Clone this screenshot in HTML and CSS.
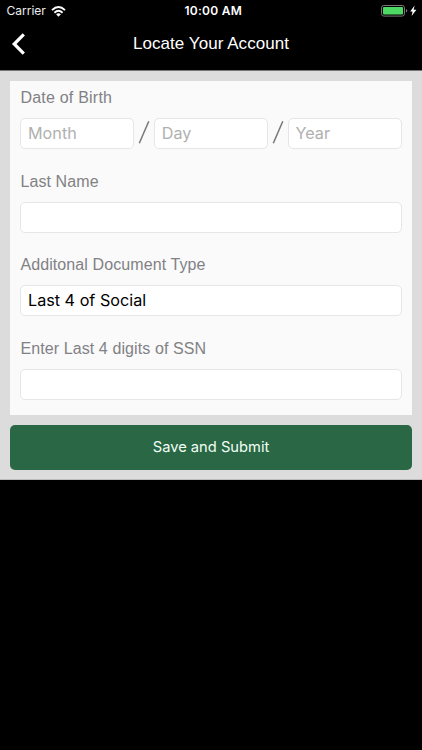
FILE: index.html
```html
<!DOCTYPE html>
<html lang="en">
<head>
<meta charset="utf-8">
<title>Locate Your Account</title>
<link rel="stylesheet" href="styles.css">
</head>
<body>
<div class="status">
  <span class="carrier">Carrier</span>
  <svg class="wifi" width="15" height="11" viewBox="0 0 15 11" fill="none" stroke="#fff" stroke-width="1.9"><path d="M1 4.1Q7.5-1.9 14 4.1M3.4 6.7Q7.5 3 11.6 6.7"/><path d="M5.1 8.3Q7.5 6.3 9.9 8.3L7.5 10.8Z" fill="#fff" stroke="none"/></svg>
  <span class="time">10:00 AM</span>
  <svg class="battery" width="37" height="12" viewBox="0 0 37 12"><rect x=".5" y=".5" width="23" height="10.6" rx="2.4" fill="none" stroke="#777"/><rect x="2" y="2" width="20" height="7.6" rx="1" fill="#4cd964"/><path d="M25 4v3.6q1.3-.5 1.3-1.8T25 4Z" fill="#777"/><path d="M33.6.6 29.2 6.5h2.4L30.6 11 35.4 4.7h-2.8Z" fill="#fff"/></svg>
</div>
<header class="nav">
  <svg class="back" width="14" height="22" viewBox="0 0 14 22" fill="none" stroke="#fff" stroke-width="3.2"><path d="M12.8 1.3 3.2 11 12.8 20.7"/></svg>
  <h1>Locate Your Account</h1>
</header>
<main>
  <form class="card">
    <div class="field">
      <label class="wide" for="month">Date of Birth</label>
      <div class="date">
        <input id="month" placeholder="Month">
        <svg width="20" height="31" viewBox="0 0 20 31"><path d="M5.3 25.2 14.8 3.2" stroke="#77777b" stroke-width="1.5"/></svg>
        <input aria-label="Day" placeholder="Day">
        <svg width="20" height="31" viewBox="0 0 20 31"><path d="M5.3 25.2 14.8 3.2" stroke="#77777b" stroke-width="1.5"/></svg>
        <input aria-label="Year" placeholder="Year">
      </div>
    </div>
    <div class="field">
      <label for="name">Last Name</label>
      <input id="name">
    </div>
    <div class="field">
      <label for="doc">Additonal Document Type</label>
      <input id="doc" value="Last 4 of Social">
    </div>
    <div class="field">
      <label for="ssn">Enter Last 4 digits of SSN</label>
      <input id="ssn">
    </div>
  </form>
  <button type="button">Save and Submit</button>
</main>
</body>
</html>
```
FILE: styles.css
```css
* { box-sizing: border-box; }
body {
  margin: 0;
  min-height: 750px;
  background: #000;
  color: #fff;
  font-family: Inter, "Liberation Sans", sans-serif;
}
.status {
  height: 22px;
  padding: 0 4px 0 6.5px;
  display: grid;
  grid-template-columns: 44px 100px 1fr auto;
  align-items: center;
  font-size: 12px;
  line-height: 22px;
}
.carrier { color: #eee; }
.time { font-weight: 600; letter-spacing: .25px; padding-left: 34px; }
.nav {
  height: 48px;
  display: grid;
  grid-template-columns: 40px 1fr 40px;
  align-items: center;
  padding-bottom: 5px;
}
.back { margin-left: 11px; }
h1 {
  margin: 0;
  text-align: center;
  font: 17px/24px "Liberation Sans", sans-serif;
  letter-spacing: .05px;
}
main {
  height: 410px;
  padding: 10px 10.4px 10px;
  background: #dcdcdc;
  border-top: 1px solid #777;
  border-bottom: 1px solid #bbb;
}
.card {
  height: 334px;
  padding: 0 10px;
  background: #fafafa;
}
.field { height: 83.6px; padding-top: 5px; }
label {
  display: block;
  height: 32px;
  font: 16px/23px "Liberation Sans", sans-serif;
  letter-spacing: .1px;
  color: #818185;
  white-space: nowrap;
}
.wide { letter-spacing: .22px; }
.date { display: grid; grid-template-columns: 1fr 20px 1fr 20px 1fr; }
input {
  display: block;
  width: 100%;
  min-width: 0;
  height: 31px;
  padding: 0 7px 1px 6.6px;
  border: 1px solid #e6e6e6;
  border-radius: 5px;
  background: #fff;
  color: #000;
  font: 16.2px/28px Inter, sans-serif;
}
input::placeholder { color: #b0b0b0; }
button {
  display: block;
  width: 100%;
  height: 45px;
  margin-top: 10px;
  padding: 0;
  border: 0;
  border-radius: 5px;
  background: #2a6744;
  color: #f1fff6;
  font: 14.7px/45px Inter, sans-serif;
}
```
